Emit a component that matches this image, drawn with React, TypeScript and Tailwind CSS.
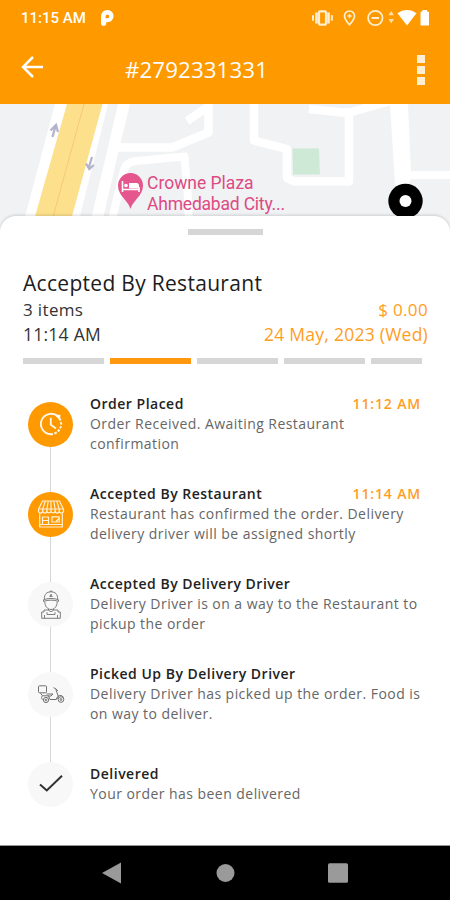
import React from 'react';

type Step = {
  title: string;
  text: string;
  time?: string;
  icon: React.ReactNode;
  done?: boolean;
};

const ClockIcon = () => (
  <svg width="24" height="24" viewBox="0 0 24 24" fill="none" stroke="#fff8ec">
    <path d="M12 22.2A10.2 10.2 0 1 1 19 4.500" strokeWidth="1.9" />
    <path d="M20.500 6.500A10.2 10.2 0 0 1 12 22.2" strokeWidth="2" strokeDasharray="2.4 1.5" />
    <path d="M16 2.800l5.200.4-.8 4.600z" fill="white" strokeWidth="0.6" />
    <path d="M11.8 5.800v7l5.200 3.600" strokeWidth="1.8" />
  </svg>
);

const StoreIcon = () => (
  <svg width="28" height="28" viewBox="0 0 28 28" fill="none" stroke="#fff0d6" strokeWidth="1.2">
    <path d="M5.500 1h17l4 8.500v2a2.2 2.2 0 0 1-4.2 0 2.2 2.2 0 0 1-4.2 0 2.2 2.2 0 0 1-4.1 0 2.2 2.2 0 0 1-4.1 0 2.2 2.2 0 0 1-4.2 0 2.2 2.2 0 0 1-4.2 0v-2z" />
    <path d="M1.5 9h25M8.300 1L5.7 9v2.5M11.200 1L9.9 9v2.5M14 1v10.5M16.800 1l1.300 8v2.5M19.700 1l2.600 8v2.5" />
    <path d="M2.7 13.500V27h22.6V13.500M2.7 24.500h22.6M5.500 24.500V17h6v7.500M5.500 20.500h6M15 16.800h7.200v5.200H15z" />
    <path d="M19 21.500l3-3" />
  </svg>
);

const CourierIcon = () => (
  <svg width="20" height="29" viewBox="0 0 20 29" fill="none" stroke="#707070" strokeWidth="0.9">
    <path d="M3.300 9C3.300 4.200 5.800 1.800 10 1.800S16.700 4.200 16.700 9M2.500 9.800c4-1.800 11-1.800 15 0v1.600c-4-1.700-11-1.700-15 0z" />
    <path d="M8.500 2L10 .7 11.500 2M10 4.200l1.200 2.300H8.800z" />
    <path d="M3.800 11.600c0 4.600 2.700 7.900 6.200 7.900s6.200-3.300 6.200-7.900M7.500 18.800v1.500l2.500 1.400 2.500-1.400v-1.500" />
    <path d="M7.300 20H3v2H.7v6.300h18.600V22H17v-2h-4.300M3.500 28v-3M16.500 28v-3M6 22.200v2.300h8v-2.300" />
  </svg>
);

const ScooterIcon = () => (
  <svg width="28" height="20" viewBox="0 0 28 20" fill="none" stroke="#707070" strokeWidth="1">
    <rect x="1.500" y="1.800" width="8" height="7" rx="1" />
    <path d="M3.500 9.300l2 2.500h6l1.500 3.700h6l2.500-2.500-2.700-7.800M5.500 11.800c-1.200 1.200-1.200 2.500 0 4M9.500 10h6.500l-2 2h-3M16.500 3.700l2.300 1 2 2.200M19.500 15.500c.3-3 2.300-4.500 5-4l2.300 2" />
    <circle cx="9" cy="16" r="2.600" />
    <circle cx="24" cy="15.500" r="2.800" />
    <circle cx="24" cy="15.500" r=".9" />
    <circle cx="9" cy="16" r=".8" />
  </svg>
);

const CheckIcon = () => (
  <svg width="24" height="20" viewBox="0 0 24 20" fill="none" stroke="#303030" strokeWidth="2">
    <path d="M1 10.500l6.800 6L23 1.800" />
  </svg>
);

const steps: Step[] = [
  {
    title: 'Order Placed',
    text: 'Order Received. Awaiting Restaurant confirmation',
    time: '11:12 AM',
    icon: <ClockIcon />,
    done: true,
  },
  {
    title: 'Accepted By Restaurant',
    text: 'Restaurant has confirmed the order. Delivery delivery driver will be assigned shortly',
    time: '11:14 AM',
    icon: <StoreIcon />,
    done: true,
  },
  {
    title: 'Accepted By Delivery Driver',
    text: 'Delivery Driver is on a way to the Restaurant to pickup the order',
    icon: <CourierIcon />,
  },
  {
    title: 'Picked Up By Delivery Driver',
    text: 'Delivery Driver has picked up the order. Food is on way to deliver.',
    icon: <ScooterIcon />,
  },
  {
    title: 'Delivered',
    text: 'Your order has been delivered',
    icon: <CheckIcon />,
  },
];

const StatusBar = () => (
  <div className="flex h-9 items-center justify-between pl-[21px] pr-[19px] text-white">
    <div className="flex items-center gap-[15px]">
      <span className="font-[Roboto,sans-serif] text-[15px] font-medium">11:15 AM</span>
      <svg width="13" height="16" viewBox="0 0 13 16">
        <path
          fill="white"
          fillRule="evenodd"
          d="M0 6.5A6.3 6.3 0 0 1 6.5 0a6 6 0 0 1 0 12.2H5.2v1A2.6 2.6 0 0 1 0 13.2zM4.600 6.200v2h2a1.800 1.800 0 1 0-2-2z"
        />
      </svg>
    </div>
    <svg width="120" height="18" viewBox="311 8.500 120 18" fill="none" stroke="#ffefd0">
      {/* vibrate */}
      <rect x="319" y="10.800" width="7" height="13.400" rx="1" strokeWidth="2.200" />
      <path d="M316.500 12v11M328.500 12v11" strokeWidth="2.600" />
      <path d="M313 14.700v5.600M331.900 14.700v5.600" strokeWidth="2" />
      {/* location */}
      <path d="M349.500 24.300c-3.200-3.600-5-6.300-5-8.800a5 5 0 0 1 10 0c0 2.500-1.800 5.200-5 8.800z" strokeWidth="1.700" />
      <path d="M349.500 13.300v4.400M347.300 15.500h4.400" strokeWidth="1.400" />
      {/* do not disturb */}
      <circle cx="375.300" cy="17.500" r="7.200" strokeWidth="1.800" />
      <path d="M371.500 17.500h7.600" strokeWidth="2" />
      <path d="M388.500 14.800l2.700-4.500 2.700 4.500zM388.500 18.500l2.700 4.500 2.700-4.500z" fill="#ffdfa6" stroke="none" />
      {/* wifi and battery */}
      <path d="M407 25l-9.500-12.200c5.500-4.500 13.500-4.500 19 0z" fill="white" stroke="none" />
      <path d="M420.500 11.700l2-1.200V9.500h4.500v1l2 1.200V25h-8.500z" fill="white" stroke="none" />
    </svg>
  </div>
);

const AppBar = () => (
  <div className="flex h-[68px] items-center pb-[2px] pl-[21px] pr-[25px]">
    <svg width="23" height="22" viewBox="0 0 23 22" fill="none" stroke="white" strokeWidth="2.500" className="mb-1">
      <path d="M22 11H2M12 1L2 11l10 10" />
    </svg>
    <h1 className="ml-[81px] flex-1 pt-px text-[22.300px] leading-[30px] tracking-[0.100px] text-white">
      #2792331331
    </h1>
    <div className="flex flex-col gap-[3px] pt-px">
      <span className="size-2 bg-[#ffefd0]" />
      <span className="size-2 bg-[#ffefd0]" />
      <span className="size-2 bg-[#ffefd0]" />
    </div>
  </div>
);

const CityMap = () => (
  <div className="relative h-[112px] shrink-0 bg-[#f0f2f3]">
    <svg width="450" height="128" viewBox="0 104 450 128" className="block">
      <path d="M0 104h450v128H0z" fill="#f0f2f3" />
      <path d="M55 104h53L76 232H21z" fill="white" />
      <path d="M118 104h12l-13 54-17 74H88z" fill="white" />
      <g fill="none" stroke="white" strokeLinejoin="round">
        <path d="M115 147.500h57l36.500-15V94M209 106l-22 15" strokeWidth="8.500" />
        <path d="M109 232l15-62q2-8 12-9l48.500-4.500 3 35 2 40" strokeWidth="8" />
        <path d="M254 94v46.500l33 8.500v29l7 3.500h55V108M309 109l39 4 46-13" strokeWidth="8.500" />
      </g>
      <path d="M390 104h18l3 67h39v8h-39l-8 15-8-10z" fill="white" />
      <path d="M67 104h35.500L71 220H34z" fill="#fde08c" />
      <path d="M84 104L53 217" stroke="#f5c977" strokeWidth="1" />
      <path d="M52.5 137l3-11M50.500 130.500l5.500-5.500 2 7M92 157l-3 10M86 163.500l3.300 5.500 4.500-4" fill="none" stroke="#b3b3cc" strokeWidth="2.300" />
      <path d="M292.500 148.500h26.500l1 26h-27z" fill="#ceead6" />
      <path d="M130.500 209c-2.500-9-12.500-13-12.500-23.500a12.500 12.500 0 0 1 25 0C143 196 133 200 130.500 209z" fill="#e5568f" />
      <path d="M122.500 181v11M122.500 189.500h16.500M139 192v-5" stroke="white" strokeWidth="1.600" />
      <path d="M129 183h7.500a2.500 2.500 0 0 1 2.500 2.500v3h-10z" fill="white" />
      <circle cx="126" cy="185.500" r="1.800" fill="white" />
      <circle cx="405.500" cy="201" r="17.200" fill="black" />
      <circle cx="405.500" cy="201" r="6" fill="white" />
    </svg>
    <div className="absolute left-[147px] top-[69px] font-[Roboto,sans-serif] text-[17.500px] leading-[20.500px] text-[#dd4a84]">
      <p>Crowne Plaza</p>
      <p className="tracking-[-0.200px]">Ahmedabad City...</p>
    </div>
  </div>
);

const Summary = () => (
  <div className="pl-[23px] pr-[22px]">
    <h2 className="text-[21px] leading-[26px] tracking-[0.300px] text-[#1c1c1c]">Accepted By Restaurant</h2>
    <div className="mt-[2px] flex justify-between text-[17px] leading-6 tracking-[0.350px]">
      <span className="text-[#333]">3 items</span>
      <span className="text-[#ff9d1e]">$ 0.00</span>
    </div>
    <div className="flex justify-between text-[17.500px] leading-6 tracking-[0.250px]">
      <span className="text-[#333]">11:14 AM</span>
      <span className="text-[#ff9d1e]">24 May, 2023 (Wed)</span>
    </div>
  </div>
);

const Progress = () => (
  <div className="mt-3 flex h-[6px] gap-[6px] pl-[23px]">
    <span className="w-[81px] bg-[#d6d6d6]" />
    <span className="w-[81px] bg-[#ff970f]" />
    <span className="w-[81px] bg-[#d6d6d6]" />
    <span className="w-[81px] bg-[#d6d6d6]" />
    <span className="w-[51px] bg-[#d6d6d6]" />
  </div>
);

const StepRow = ({ step, first, last }: { step: Step; first: boolean; last: boolean }) => (
  <li className="flex h-[90px]">
    <div className="flex w-[45px] flex-col items-center">
      <span className={`w-[1.500px] flex-1 ${first ? '' : 'bg-[#d6d6d6]'}`} />
      <span
        className={`flex size-[45px] items-center justify-center rounded-full ${
          step.done ? 'bg-[#ff9900]' : 'bg-[#f8f8f8]'
        }`}
      >
        {step.icon}
      </span>
      <span className={`w-[1.500px] flex-1 ${last ? '' : 'bg-[#d6d6d6]'}`} />
    </div>
    <div className="ml-[17px] flex w-[337px] flex-col justify-center">
      <div className="flex justify-between pr-[6px] text-[14px] font-semibold leading-5">
        <h3 className="tracking-[0.500px] text-[#222]">{step.title}</h3>
        {step.time && <span className="tracking-[0.850px] text-[#ff9d1e]">{step.time}</span>}
      </div>
      <p className="text-[14px] leading-5 tracking-[0.450px] text-[#666]">{step.text}</p>
    </div>
  </li>
);

const NavBar = () => (
  <div className="flex h-[55px] items-center border-t border-[#999] bg-black pl-[102px]">
    <svg width="247" height="22" viewBox="102 0 247 22" fill="#9a9a9a">
      <path d="M102 11l19-10.500v21z" />
      <circle cx="225.500" cy="11" r="9" />
      <rect x="328" y="1.300" width="20" height="19.500" rx="1.500" />
    </svg>
  </div>
);

const App: React.FC = () => {
  return (
    <div className="flex h-[900px] w-[450px] flex-col overflow-hidden bg-white font-['Open_Sans',sans-serif]">
      <header className="h-[104px] shrink-0 bg-[#ff9900]">
        <StatusBar />
        <AppBar />
      </header>

      <CityMap />

      {/* Order sheet */}
      <main className="relative flex-1 rounded-t-[16px] bg-white shadow-[0_-1px_3px_rgba(0,0,0,0.15)]">
        <div className="mx-auto mt-[13px] h-[6px] w-[75px] bg-[#d6d6d6]" />
        <div className="mt-[35px]">
          <Summary />
          <Progress />
        </div>
        <ol className="mt-[15px] pl-7">
          {steps.map((step, i) => (
            <StepRow key={step.title} step={step} first={i === 0} last={i === steps.length - 1} />
          ))}
        </ol>
      </main>

      <NavBar />
    </div>
  );
};

export default App;
